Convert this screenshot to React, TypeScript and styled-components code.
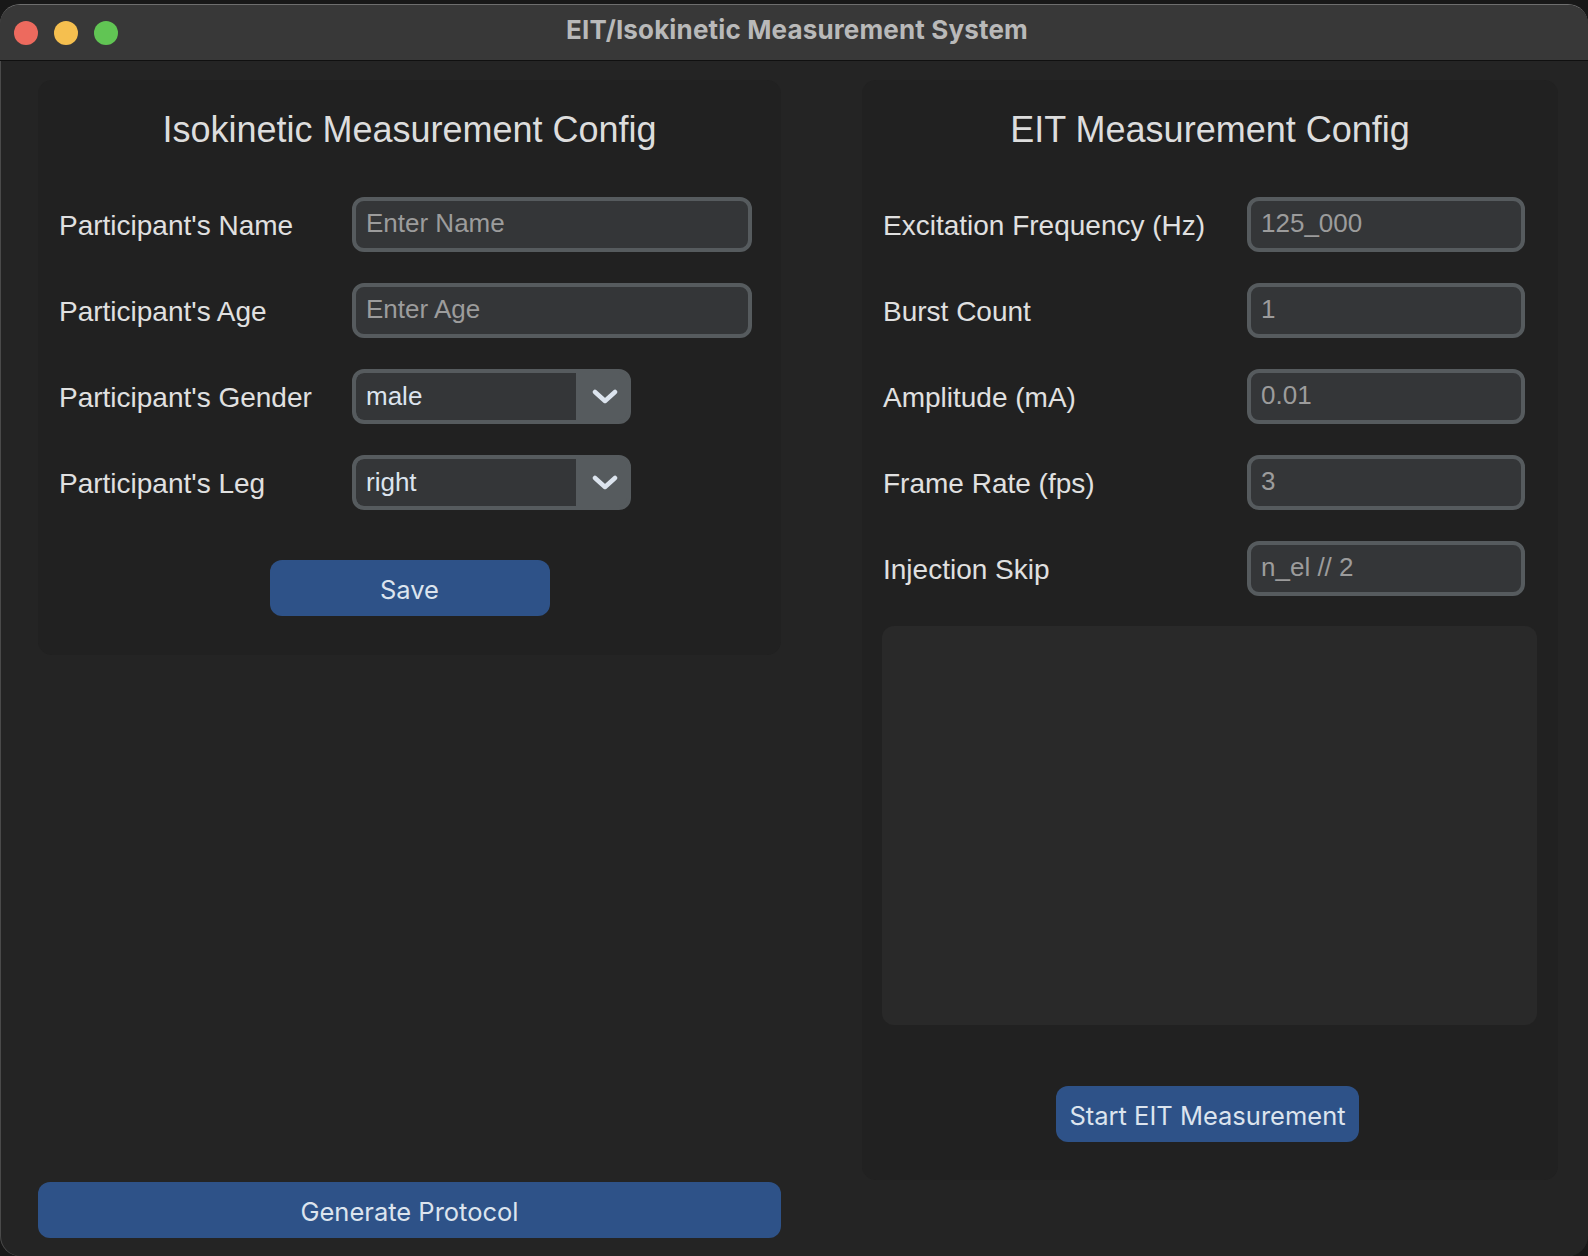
import React from "react";
import styled, { createGlobalStyle } from "styled-components";

const Global = createGlobalStyle`
  html, body { margin: 0; padding: 0; background: #1a1a1a; }
  body { width: 1588px; height: 1256px; overflow: hidden; font-family: "Liberation Sans", Arial, sans-serif; }
  * { box-sizing: border-box; }
`;

const Desktop = styled.div`
  width: 1588px;
  height: 1256px;
  padding-top: 4px;
  background: #181818;
`;

const Window = styled.div`
  height: 1252px;
  border-radius: 20px;
  overflow: hidden;
  background: #242424;
  border-top: 1px solid #6e6e6e;
  box-shadow: inset 1px 0 0 #4a4a4a;
  display: flex;
  flex-direction: column;
`;

const TitleBar = styled.div`
  height: 56px;
  flex: none;
  background: #383838;
  border-bottom: 1px solid #101010;
  display: grid;
  grid-template-columns: 1fr auto 1fr;
  align-items: center;
  padding-left: 14px;
`;

const Lights = styled.div`
  display: flex;
  gap: 16px;
  align-items: center;
`;

const Light = styled.span<{ $c: string }>`
  width: 24px;
  height: 24px;
  border-radius: 50%;
  background: ${(p) => p.$c};
`;

const Title = styled.div`
  font-family: Inter, "Liberation Sans", sans-serif;
  font-weight: 700;
  font-size: 26px;
  letter-spacing: 0.15px;
  color: #b9b9b9;
  margin-top: -7px;
  margin-left: -8px;
`;

const Content = styled.div`
  flex: 1;
  display: flex;
  gap: 81px;
  padding: 19px 30px 18px 38px;
`;

const LeftColumn = styled.div`
  width: 743px;
  height: 1158px;
  display: flex;
  flex-direction: column;
  justify-content: space-between;
`;

const Panel = styled.section<{ $w: string; $h: string }>`
  width: ${(p) => p.$w};
  height: ${(p) => p.$h};
  background: #212121;
  border-radius: 14px;
  display: flex;
  flex-direction: column;
  padding-top: 28px;
`;

const Heading = styled.h2`
  margin: 0 0 45px;
  font-weight: 400;
  font-size: 36px;
  line-height: 44px;
  text-align: center;
  color: #dddddd;
`;

const FormGrid = styled.div<{ $label: number }>`
  display: grid;
  grid-template-columns: ${(p) => p.$label}px 1fr;
  grid-auto-rows: 55px;
  row-gap: 31px;
  padding-left: 21px;
  align-items: center;
`;

const Label = styled.label`
  font-size: 28px;
  color: #e0e0e0;
  white-space: nowrap;
  padding-top: 3px;
`;

const Entry = styled.div<{ $w: number; $placeholder?: boolean }>`
  width: ${(p) => p.$w}px;
  height: 55px;
  border: 4px solid #565b5e;
  border-radius: 12px;
  background: #343638;
  display: flex;
  align-items: center;
  padding: 0 0 3px 10px;
  font-size: 26px;
  color: ${(p) => (p.$placeholder ? "#9c9c9c" : "#dce4ee")};
`;

const Combo = styled.div`
  width: 279px;
  height: 55px;
  border: 4px solid #565b5e;
  border-radius: 12px;
  background: #565b5e;
  display: flex;
  overflow: hidden;
`;

const ComboValue = styled.div`
  flex: 1;
  background: #343638;
  border-radius: 8px 0 0 8px;
  display: flex;
  align-items: center;
  padding: 0 0 1px 10px;
  font-size: 26px;
  color: #dce4ee;
`;

const ComboArrow = styled.div`
  width: 51px;
  display: flex;
  align-items: center;
  justify-content: center;
  padding-left: 6px;
`;

const Button = styled.button<{ $w: string }>`
  width: ${(p) => p.$w};
  height: 56px;
  flex: none;
  border: none;
  border-radius: 12px;
  background: #2e5288;
  color: #dce4ee;
  font-family: Inter, "Liberation Sans", sans-serif;
  font-size: 25.5px;
  font-weight: 400;
  padding: 3px 0 0;
  align-self: center;
`;

const SaveButton = styled(Button)`
  margin-top: 50px;
`;

const StartButton = styled(Button)`
  margin-top: 61px;
  margin-right: 5px;
`;

const TextArea = styled.div`
  margin: 30px 0 0 20px;
  width: 655px;
  height: 399px;
  border-radius: 12px;
  background: #292929;
`;

const Chevron = () => (
  <svg width="26" height="16" viewBox="0 0 26 16">
    <polyline
      points="3,3 13,12 23,3"
      fill="none"
      stroke="#dce4ee"
      strokeWidth="4.5"
      strokeLinecap="round"
      strokeLinejoin="round"
    />
  </svg>
);

const Select = ({ value }: { value: string }) => (
  <Combo>
    <ComboValue>{value}</ComboValue>
    <ComboArrow>
      <Chevron />
    </ComboArrow>
  </Combo>
);

const eitFields = [
  ["Excitation Frequency (Hz)", "125_000"],
  ["Burst Count", "1"],
  ["Amplitude (mA)", "0.01"],
  ["Frame Rate (fps)", "3"],
  ["Injection Skip", "n_el // 2"],
];

export default function App() {
  return (
    <>
      <Global />
      <Desktop>
        <Window>
          <TitleBar>
            <Lights>
              <Light $c="#ed6a5e" />
              <Light $c="#f5bf4f" />
              <Light $c="#61c554" />
            </Lights>
            <Title>EIT/Isokinetic Measurement System</Title>
            <div />
          </TitleBar>
          <Content>
            <LeftColumn>
              <Panel $w="743px" $h="575px">
                <Heading>Isokinetic Measurement Config</Heading>
                <FormGrid $label={293}>
                  <Label>Participant's Name</Label>
                  <Entry $w={400} $placeholder>Enter Name</Entry>
                  <Label>Participant's Age</Label>
                  <Entry $w={400} $placeholder>Enter Age</Entry>
                  <Label>Participant's Gender</Label>
                  <Select value="male" />
                  <Label>Participant's Leg</Label>
                  <Select value="right" />
                </FormGrid>
                <SaveButton $w="280px">Save</SaveButton>
              </Panel>
              <Button $w="100%">Generate Protocol</Button>
            </LeftColumn>
            <Panel $w="696px" $h="1100px">
              <Heading>EIT Measurement Config</Heading>
              <FormGrid $label={364}>
                {eitFields.map(([label, value]) => (
                  <React.Fragment key={label}>
                    <Label>{label}</Label>
                    <Entry $w={278} $placeholder>{value}</Entry>
                  </React.Fragment>
                ))}
              </FormGrid>
              <TextArea />
              <StartButton $w="303px">Start EIT Measurement</StartButton>
            </Panel>
          </Content>
        </Window>
      </Desktop>
    </>
  );
}
